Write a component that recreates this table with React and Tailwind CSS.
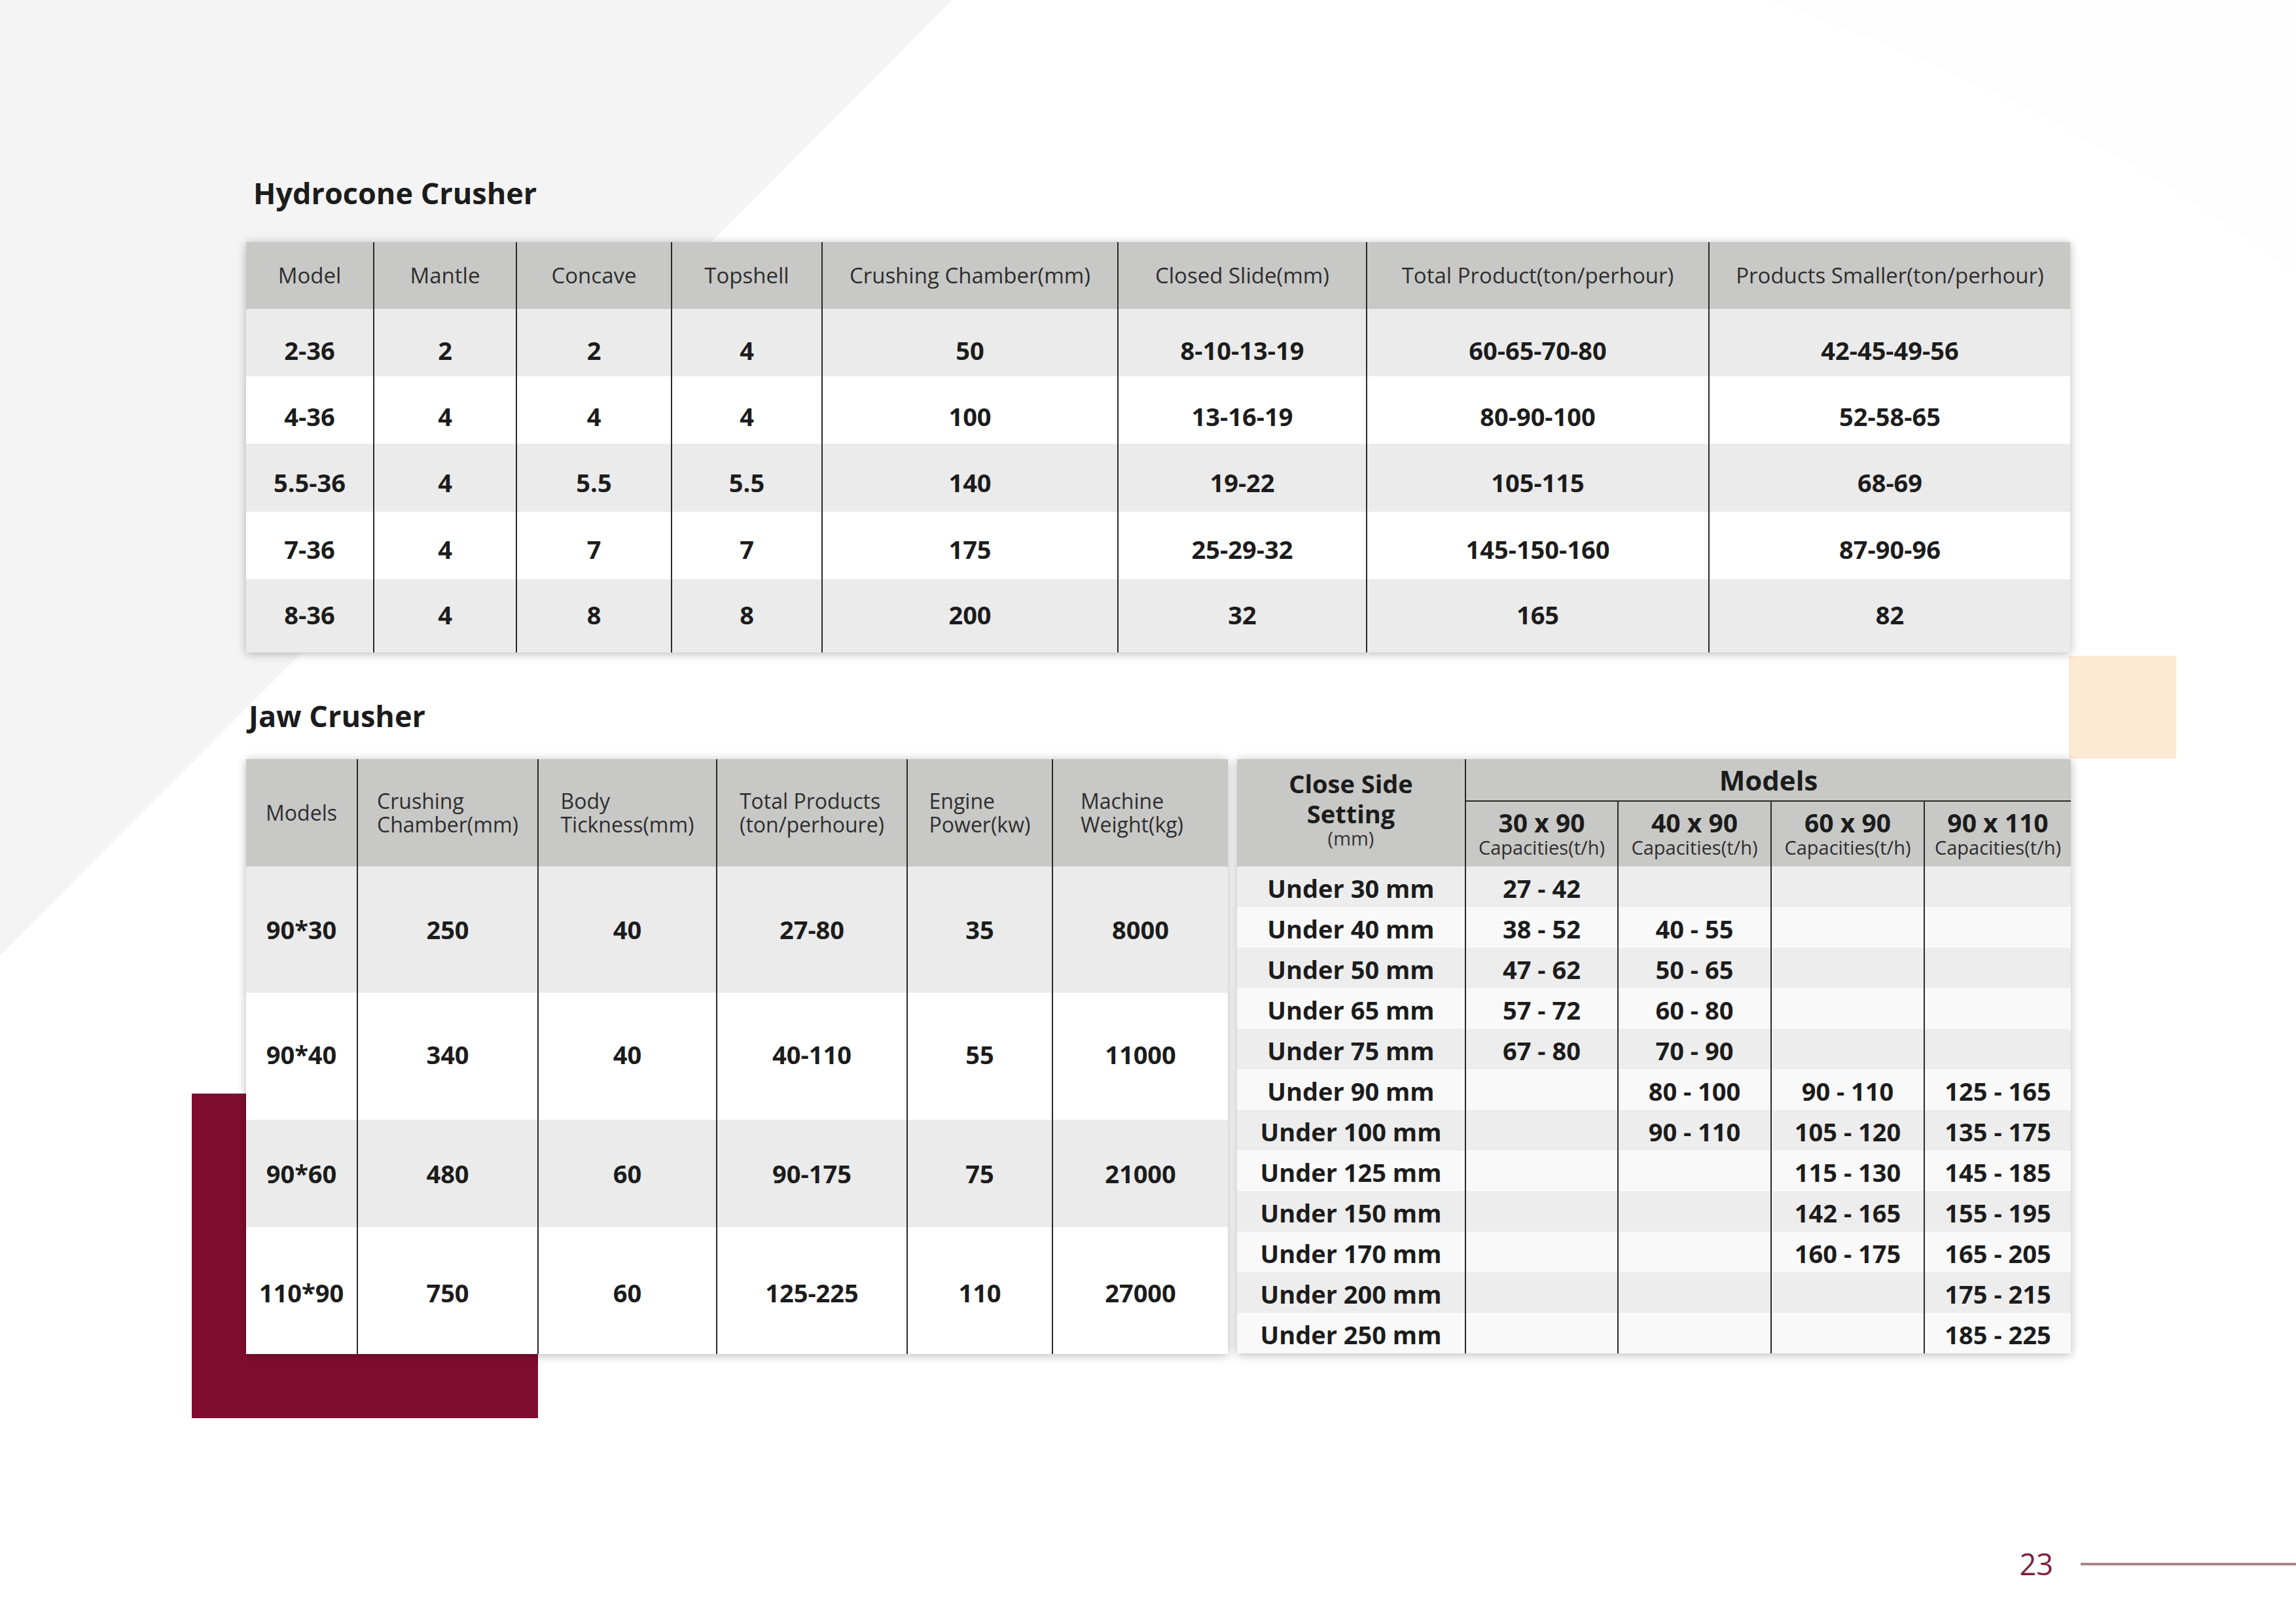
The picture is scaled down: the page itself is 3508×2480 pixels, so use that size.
import React from 'react'

const HYDRO_HEAD = [
  'Model',
  'Mantle',
  'Concave',
  'Topshell',
  'Crushing Chamber(mm)',
  'Closed Slide(mm)',
  'Total Product(ton/perhour)',
  'Products Smaller(ton/perhour)',
]

const HYDRO_ROWS = [
  ['2-36', '2', '2', '4', '50', '8-10-13-19', '60-65-70-80', '42-45-49-56'],
  ['4-36', '4', '4', '4', '100', '13-16-19', '80-90-100', '52-58-65'],
  ['5.5-36', '4', '5.5', '5.5', '140', '19-22', '105-115', '68-69'],
  ['7-36', '4', '7', '7', '175', '25-29-32', '145-150-160', '87-90-96'],
  ['8-36', '4', '8', '8', '200', '32', '165', '82'],
]
// text sits a little low in the upper rows of the original
const HYDRO_ROW_H = [
  'h-[103px] pt-[24px]',
  'h-[103px] pt-[20px]',
  'h-[104px] pt-[14px]',
  'h-[103px] pt-[12px]',
  'h-[112px] pb-[4px]',
]

const JAW_HEAD = [
  ['Models'],
  ['Crushing', 'Chamber(mm)'],
  ['Body', 'Tickness(mm)'],
  ['Total Products', '(ton/perhoure)'],
  ['Engine', 'Power(kw)'],
  ['Machine', 'Weight(kg)'],
]
const JAW_HEAD_PAD = ['', '', '', '', '', 'pr-[26px]']
const JAW_ROWS = [
  ['90*30', '250', '40', '27-80', '35', '8000'],
  ['90*40', '340', '40', '40-110', '55', '11000'],
  ['90*60', '480', '60', '90-175', '75', '21000'],
  ['110*90', '750', '60', '125-225', '110', '27000'],
]
const JAW_ROW_H = ['h-[193px]', 'h-[194px] pb-[6px]', 'h-[164px]', 'h-[194px] pt-[6px]']

const MODELS = ['30 x 90', '40 x 90', '60 x 90', '90 x 110']
const CSS_ROWS = [
  ['Under 30 mm', '27 - 42', '', '', ''],
  ['Under 40 mm', '38 - 52', '40 - 55', '', ''],
  ['Under 50 mm', '47 - 62', '50 - 65', '', ''],
  ['Under 65 mm', '57 - 72', '60 - 80', '', ''],
  ['Under 75 mm', '67 - 80', '70 - 90', '', ''],
  ['Under 90 mm', '', '80 - 100', '90 - 110', '125 - 165'],
  ['Under 100 mm', '', '90 - 110', '105 - 120', '135 - 175'],
  ['Under 125 mm', '', '', '115 - 130', '145 - 185'],
  ['Under 150 mm', '', '', '142 - 165', '155 - 195'],
  ['Under 170 mm', '', '', '160 - 175', '165 - 205'],
  ['Under 200 mm', '', '', '', '175 - 215'],
  ['Under 250 mm', '', '', '', '185 - 225'],
]

const rowBg = (i) => (i % 2 === 0 ? 'bg-[#ebebeb]' : 'bg-white')

function HydroconeTable() {
  return (
    <div className="grid grid-cols-[194px_218px_237px_230px_452px_380px_523px_553px] w-[2787px] shadow-[0_2px_14px_rgba(0,0,0,0.28)] bg-white">
      {HYDRO_HEAD.map((h, c) => (
        <div
          key={h}
          className={`h-[102px] flex items-center justify-center bg-[#c8c8c6] text-[33px] text-[#2e2e2e] ${c > 0 ? 'border-l-2 border-[#2a2a2a]' : ''}`}
        >
          {h}
        </div>
      ))}
      {HYDRO_ROWS.map((row, r) =>
        row.map((v, c) => (
          <div
            key={`${r}-${c}`}
            className={`${HYDRO_ROW_H[r]} ${rowBg(r)} flex items-center justify-center text-[38px] font-bold text-[#1c1c1c] ${c > 0 ? 'border-l-2 border-[#2a2a2a]' : ''}`}
          >
            {v}
          </div>
        ))
      )}
    </div>
  )
}

function JawTable() {
  return (
    <div className="grid grid-cols-[169px_276px_273px_291px_222px_269px] w-[1500px] shadow-[0_2px_14px_rgba(0,0,0,0.28)] bg-white">
      {JAW_HEAD.map((lines, c) => (
        <div
          key={c}
          className={`h-[164px] flex items-center justify-center bg-[#c8c8c6] text-[32px] leading-[36px] text-[#2e2e2e] ${JAW_HEAD_PAD[c]} ${c > 0 ? 'border-l-2 border-[#2a2a2a]' : ''}`}
        >
          <div className="text-left">
            {lines.map((l) => (
              <div key={l}>{l}</div>
            ))}
          </div>
        </div>
      ))}
      {JAW_ROWS.map((row, r) =>
        row.map((v, c) => (
          <div
            key={`${r}-${c}`}
            className={`${JAW_ROW_H[r]} ${rowBg(r)} flex items-center justify-center text-[38px] font-bold text-[#1c1c1c] ${c > 0 ? 'border-l-2 border-[#2a2a2a]' : ''}`}
          >
            {v}
          </div>
        ))
      )}
    </div>
  )
}

function SettingTable() {
  return (
    <div className="w-[1274px] shadow-[0_2px_14px_rgba(0,0,0,0.28)] bg-white">
      {/* header */}
      <div className="grid grid-cols-[348px_233px_234px_234px_225px] grid-rows-[65px_99px] bg-[#c8c8c6]">
        <div className="row-span-2 flex flex-col items-center justify-center pb-[14px] text-[#1c1c1c]">
          <div className="text-[38px] leading-[46px] font-bold">Close Side</div>
          <div className="text-[38px] leading-[46px] font-bold">Setting</div>
          <div className="text-[29px] leading-[30px] text-[#333]">(mm)</div>
        </div>
        <div className="col-span-4 border-l-2 border-b-2 border-[#2a2a2a] flex items-center justify-center text-[42px] font-bold text-[#1c1c1c]">
          Models
        </div>
        {MODELS.map((m) => (
          <div key={m} className="border-l-2 border-[#2a2a2a] flex flex-col items-center justify-center pt-[2px]">
            <div className="text-[39px] leading-[38px] font-bold text-[#1c1c1c]">{m}</div>
            <div className="text-[29px] leading-[38px] text-[#2e2e2e] whitespace-nowrap">Capacities(t/h)</div>
          </div>
        ))}
      </div>
      {/* body */}
      <div className="grid grid-cols-[348px_233px_234px_234px_225px]">
        {CSS_ROWS.map((row, r) =>
          row.map((v, c) => (
            <div
              key={`${r}-${c}`}
              className={`h-[62px] pt-[4px] ${r % 2 === 0 ? 'bg-[#ededed]' : 'bg-[#f9f9f9]'} flex items-center justify-center text-[38px] font-bold text-[#1c1c1c] whitespace-nowrap ${c > 0 ? 'border-l-2 border-[#2a2a2a]' : ''}`}
            >
              {v}
            </div>
          ))
        )}
      </div>
    </div>
  )
}

export default function App() {
  return (
    <div className="relative w-[3508px] h-[2480px] overflow-hidden bg-white font-['Open_Sans','Noto_Sans',sans-serif] flex flex-col">
      {/* background shapes */}
      <svg className="absolute inset-0" width="3508" height="2480" viewBox="0 0 3508 2480">
        <polygon points="0,0 1455,0 0,1460" fill="#f4f4f4" />
        <path d="M2700,0 L3508,0 L3508,420 C3300,260 3020,110 2700,0 Z" fill="#fdfdfd" />
      </svg>
      <div className="absolute left-[293px] top-[1671px] w-[529px] h-[496px] bg-[#800d30]" />
      <div className="absolute left-[3161px] top-[1002px] w-[164px] h-[157px] bg-[#fee9d3]" />

      <main className="relative flex flex-col pl-[376px] pt-[265px]">
        <h2 className="h-[60px] ml-[11px] flex items-center text-[45px] font-bold text-[#1c1c1c]">
          Hydrocone Crusher
        </h2>
        <div className="mt-[45px]">
          <HydroconeTable />
        </div>

        <h2 className="mt-[67px] h-[60px] ml-[4px] flex items-center text-[45px] font-bold text-[#1c1c1c]">
          Jaw Crusher
        </h2>
        <div className="mt-[36px] flex items-start gap-[14px]">
          <JawTable />
          <SettingTable />
        </div>
      </main>

      <footer className="relative mt-[291px] flex items-center justify-end gap-[42px]">
        <span className="text-[45px] leading-[60px] text-[#7d2140]">23</span>
        <span className="w-[329px] h-[4px] bg-[#a8868a]" />
      </footer>
    </div>
  )
}
